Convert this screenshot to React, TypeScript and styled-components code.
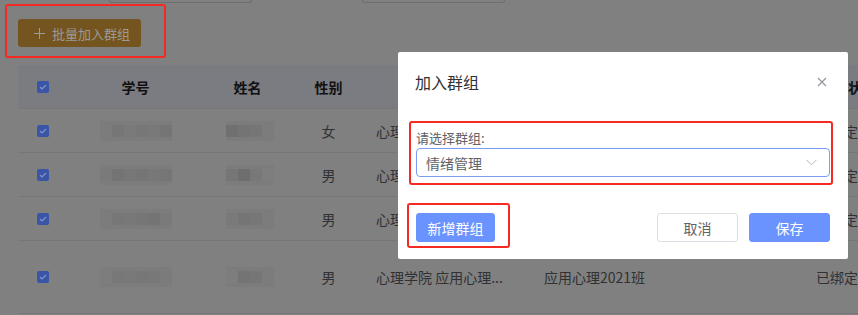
import styled, { createGlobalStyle } from 'styled-components';

const GlobalStyle = createGlobalStyle`
  html, body {
    margin: 0;
    padding: 0;
  }
  body {
    background: #808080;
    font-family: "Noto Sans CJK SC", "Noto Sans", sans-serif;
    overflow: hidden;
  }
  * {
    box-sizing: border-box;
  }
`;

interface Student {
  gender: string;
  college: string;
  className: string;
  status: string;
  tall?: boolean;
  idShades: number[];
  nameShades: number[];
}

const students: Student[] = [
  { gender: '女', college: '心理学院 应用心理...', className: '应用心理2021班', status: '已绑定', idShades: [124, 118, 122, 119, 121, 117], nameShades: [112, 116, 118, 124] },
  { gender: '男', college: '心理学院 应用心理...', className: '应用心理2021班', status: '已绑定', idShades: [122, 116, 119, 117, 120, 118], nameShades: [118, 110, 120, 126] },
  { gender: '男', college: '心理学院 应用心理...', className: '应用心理2021班', status: '已绑定', idShades: [124, 119, 120, 118, 116, 122], nameShades: [122, 117, 119, 124] },
  { gender: '男', college: '心理学院 应用心理...', className: '应用心理2021班', status: '已绑定', tall: true, idShades: [125, 120, 121, 119, 120, 123], nameShades: [126, 116, 118, 124] },
];

function CheckIcon() {
  return (
    <svg width="8" height="6" viewBox="0 0 8 6" fill="none">
      <path d="M1 3l2 2 4-4" stroke="#8796c4" strokeWidth="1.1" />
    </svg>
  );
}

function Blurred({ shades, width }: { shades: number[]; width: number }) {
  return (
    <Mosaic $width={width}>
      {shades.map((s, i) => (
        <Tile key={i} $shade={s} />
      ))}
    </Mosaic>
  );
}

function App() {
  return (
    <Page>
      <GlobalStyle />
      <FilterRow>
        <FilterBox />
        <FilterBox />
      </FilterRow>

      <Toolbar>
        <WarnButton>
          <svg width="11" height="11" viewBox="0 0 11 11">
            <path d="M5.5 0v11M0 5.5h11" stroke="#9a9a98" strokeWidth="1" />
          </svg>
          批量加入群组
        </WarnButton>
      </Toolbar>

      <Table>
        <HeadRow>
          <CheckCell><Check><CheckIcon /></Check></CheckCell>
          <HeadCell $align="center">学号</HeadCell>
          <HeadCell $align="center">姓名</HeadCell>
          <HeadCell $align="center">性别</HeadCell>
          <HeadCell $align="center">学院专业</HeadCell>
          <HeadCell $align="center">班级</HeadCell>
          <HeadCell $align="left" $pad={4}>绑定状态</HeadCell>
        </HeadRow>
        {students.map((s, i) => (
          <BodyRow key={i} $tall={s.tall}>
            <CheckCell><Check><CheckIcon /></Check></CheckCell>
            <Cell $align="center"><Blurred shades={s.idShades} width={72} /></Cell>
            <Cell $align="center" $shift={5}><Blurred shades={s.nameShades} width={48} /></Cell>
            <Cell $align="center">{s.gender}</Cell>
            <Cell $align="left">{s.college}</Cell>
            <Cell $align="left">{s.className}</Cell>
            <Cell $align="left">{s.status}</Cell>
          </BodyRow>
        ))}
      </Table>

      <Dialog>
        <DialogHeader>
          <DialogTitle>加入群组</DialogTitle>
          <CloseButton>
            <svg width="10" height="10" viewBox="0 0 10 10">
              <path d="M1 1l8 8M9 1l-8 8" stroke="#909399" strokeWidth="1.1" />
            </svg>
          </CloseButton>
        </DialogHeader>
        <DialogBody>
          <FieldLabel>请选择群组:</FieldLabel>
          <Select>
            <span>情绪管理</span>
            <svg width="11" height="7" viewBox="0 0 11 7" fill="none">
              <path d="M0.5 0.8l5 5 5-5" stroke="#b4b6bb" strokeWidth="1" />
            </svg>
          </Select>
        </DialogBody>
        <DialogFooter>
          <Button $primary $wide={79}>新增群组</Button>
          <FooterRight>
            <Button>取消</Button>
            <Button $primary>保存</Button>
          </FooterRight>
        </DialogFooter>
      </Dialog>

      <Mark style={{ left: 5, top: 4, width: 161, height: 54 }} />
      <Mark style={{ left: 409, top: 121, width: 424, height: 64 }} />
      <Mark style={{ left: 407, top: 203, width: 103, height: 45 }} />
    </Page>
  );
}

const Page = styled.div`
  position: relative;
  width: 858px;
  height: 315px;
  overflow: hidden;
  background: #808080;
`;

const FilterRow = styled.div`
  display: flex;
  gap: 110px;
  padding-left: 109px;
  height: 3px;
`;

const FilterBox = styled.div`
  width: 143px;
  height: 3px;
  border: 1px solid #6e6e6e;
  border-top: none;
  border-radius: 0 0 4px 4px;
`;

const Toolbar = styled.div`
  display: flex;
  padding: 16px 0 0 18px;
  height: 62px;
`;

const WarnButton = styled.div`
  display: flex;
  align-items: center;
  gap: 7px;
  width: 123px;
  height: 28px;
  padding-left: 16px;
  border-radius: 3px;
  background: #74551f;
  color: #9a9a98;
  font-size: 13px;
`;

const Table = styled.div`
  margin-left: 18px;
  width: 880px;
`;

const columns = '50px 135px 89px 73px 168px 272px 93px';

const HeadRow = styled.div`
  display: grid;
  grid-template-columns: ${columns};
  height: 44px;
  align-items: center;
  background: #7b7b82;
  border-bottom: 1px solid #777;
`;

const BodyRow = styled.div<{ $tall?: boolean }>`
  display: grid;
  grid-template-columns: ${columns};
  height: ${(p) => (p.$tall ? 73 : 44)}px;
  align-items: center;
  border-bottom: 1px solid #767676;
`;

const CheckCell = styled.div`
  display: flex;
  justify-content: center;
`;

const Check = styled.div`
  display: flex;
  align-items: center;
  justify-content: center;
  width: 12px;
  height: 12px;
  border-radius: 2px;
  background: #3a55a8;
`;

const HeadCell = styled.div<{ $align: 'left' | 'center'; $pad?: number }>`
  text-align: ${(p) => p.$align};
  padding-left: ${(p) => (p.$align === 'left' ? 11 + (p.$pad ?? 0) : 0)}px;
  font-size: 14px;
  font-weight: 700;
  color: #111;
  white-space: nowrap;
`;

const Cell = styled.div<{ $align: 'left' | 'center'; $shift?: number }>`
  display: flex;
  justify-content: ${(p) => (p.$align === 'center' ? 'center' : 'flex-start')};
  padding-left: ${(p) => (p.$align === 'left' ? 11 : p.$shift ?? 0)}px;
  font-size: 14px;
  color: #303133;
  white-space: nowrap;
`;

const Mosaic = styled.div<{ $width: number }>`
  display: grid;
  grid-template-columns: repeat(auto-fill, 12px);
  width: ${(p) => p.$width}px;
  height: 20px;
  background: #7c7c7c;
`;

const Tile = styled.div<{ $shade: number }>`
  height: 12px;
  margin-top: 4px;
  background: rgb(${(p) => `${p.$shade}, ${p.$shade}, ${p.$shade}`});
`;

const Dialog = styled.div`
  position: absolute;
  left: 398px;
  top: 52px;
  width: 450px;
  height: 207px;
  background: #fff;
  border-radius: 2px;
  display: flex;
  flex-direction: column;
`;

const DialogHeader = styled.div`
  display: flex;
  justify-content: space-between;
  align-items: center;
  padding: 18px 21px 0 17px;
`;

const DialogTitle = styled.div`
  font-size: 16px;
  line-height: 24px;
  color: #303133;
`;

const CloseButton = styled.div`
  display: flex;
  width: 10px;
  height: 10px;
`;

const DialogBody = styled.div`
  padding: 35px 18px 0 18px;
`;

const FieldLabel = styled.div`
  font-size: 13px;
  line-height: 18px;
  color: #606266;
  margin-bottom: 1px;
`;

const Select = styled.div`
  display: flex;
  align-items: center;
  justify-content: space-between;
  height: 29px;
  padding: 0 12px 0 9px;
  border: 1px solid #7b9cf4;
  border-radius: 4px;
  font-size: 14px;
  color: #606266;
`;

const DialogFooter = styled.div`
  display: flex;
  justify-content: space-between;
  padding: 36px 18px 0 18px;
`;

const FooterRight = styled.div`
  display: flex;
  gap: 11px;
`;

const Button = styled.div<{ $primary?: boolean; $wide?: number }>`
  display: flex;
  align-items: center;
  justify-content: center;
  width: ${(p) => p.$wide ?? 81}px;
  height: 29px;
  border-radius: 3px;
  font-size: 14px;
  background: ${(p) => (p.$primary ? '#6b93ff' : '#fff')};
  color: ${(p) => (p.$primary ? '#fff' : '#606266')};
  border: 1px solid ${(p) => (p.$primary ? '#6b93ff' : '#dcdfe6')};
`;

const Mark = styled.div`
  position: absolute;
  border: 2px solid #f52a22;
  border-radius: 3px;
  pointer-events: none;
`;

export default App;
